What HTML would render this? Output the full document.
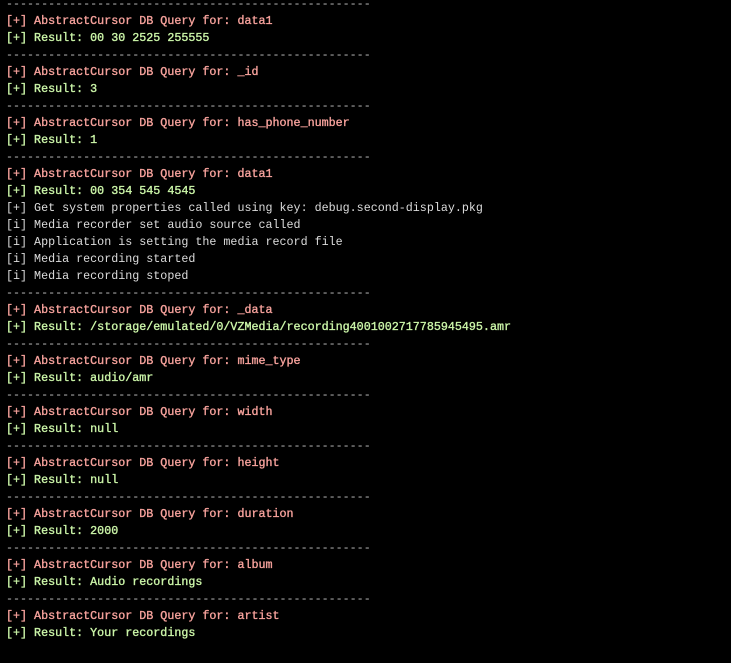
<!DOCTYPE html>
<html><head><style>
html,body{margin:0;padding:0;background:#000;width:731px;height:663px;overflow:hidden}
pre{position:absolute;left:6px;top:-4px;margin:0;font-family:"Liberation Mono",monospace;font-size:11.7px;line-height:17px;color:#d4d4d4;font-weight:normal}
.r{color:#f7a29c;-webkit-text-stroke:0.35px #f7a29c}.g{color:#cbf5a8;-webkit-text-stroke:0.35px #cbf5a8}.d{color:#bdbdbd}.w{color:#dcdcdc}
</style></head><body><pre><span class="d">----------------------------------------------------</span>
<span class="r">[+] AbstractCursor DB Query for: data1</span>
<span class="g">[+] Result: 00 30 2525 255555</span>
<span class="d">----------------------------------------------------</span>
<span class="r">[+] AbstractCursor DB Query for: _id</span>
<span class="g">[+] Result: 3</span>
<span class="d">----------------------------------------------------</span>
<span class="r">[+] AbstractCursor DB Query for: has_phone_number</span>
<span class="g">[+] Result: 1</span>
<span class="d">----------------------------------------------------</span>
<span class="r">[+] AbstractCursor DB Query for: data1</span>
<span class="g">[+] Result: 00 354 545 4545</span>
<span class="w">[+] Get system properties called using key: debug.second-display.pkg</span>
<span class="w">[i] Media recorder set audio source called</span>
<span class="w">[i] Application is setting the media record file</span>
<span class="w">[i] Media recording started</span>
<span class="w">[i] Media recording stoped</span>
<span class="d">----------------------------------------------------</span>
<span class="r">[+] AbstractCursor DB Query for: _data</span>
<span class="g">[+] Result: /storage/emulated/0/VZMedia/recording4001002717785945495.amr</span>
<span class="d">----------------------------------------------------</span>
<span class="r">[+] AbstractCursor DB Query for: mime_type</span>
<span class="g">[+] Result: audio/amr</span>
<span class="d">----------------------------------------------------</span>
<span class="r">[+] AbstractCursor DB Query for: width</span>
<span class="g">[+] Result: null</span>
<span class="d">----------------------------------------------------</span>
<span class="r">[+] AbstractCursor DB Query for: height</span>
<span class="g">[+] Result: null</span>
<span class="d">----------------------------------------------------</span>
<span class="r">[+] AbstractCursor DB Query for: duration</span>
<span class="g">[+] Result: 2000</span>
<span class="d">----------------------------------------------------</span>
<span class="r">[+] AbstractCursor DB Query for: album</span>
<span class="g">[+] Result: Audio recordings</span>
<span class="d">----------------------------------------------------</span>
<span class="r">[+] AbstractCursor DB Query for: artist</span>
<span class="g">[+] Result: Your recordings</span>
</pre></body></html>
